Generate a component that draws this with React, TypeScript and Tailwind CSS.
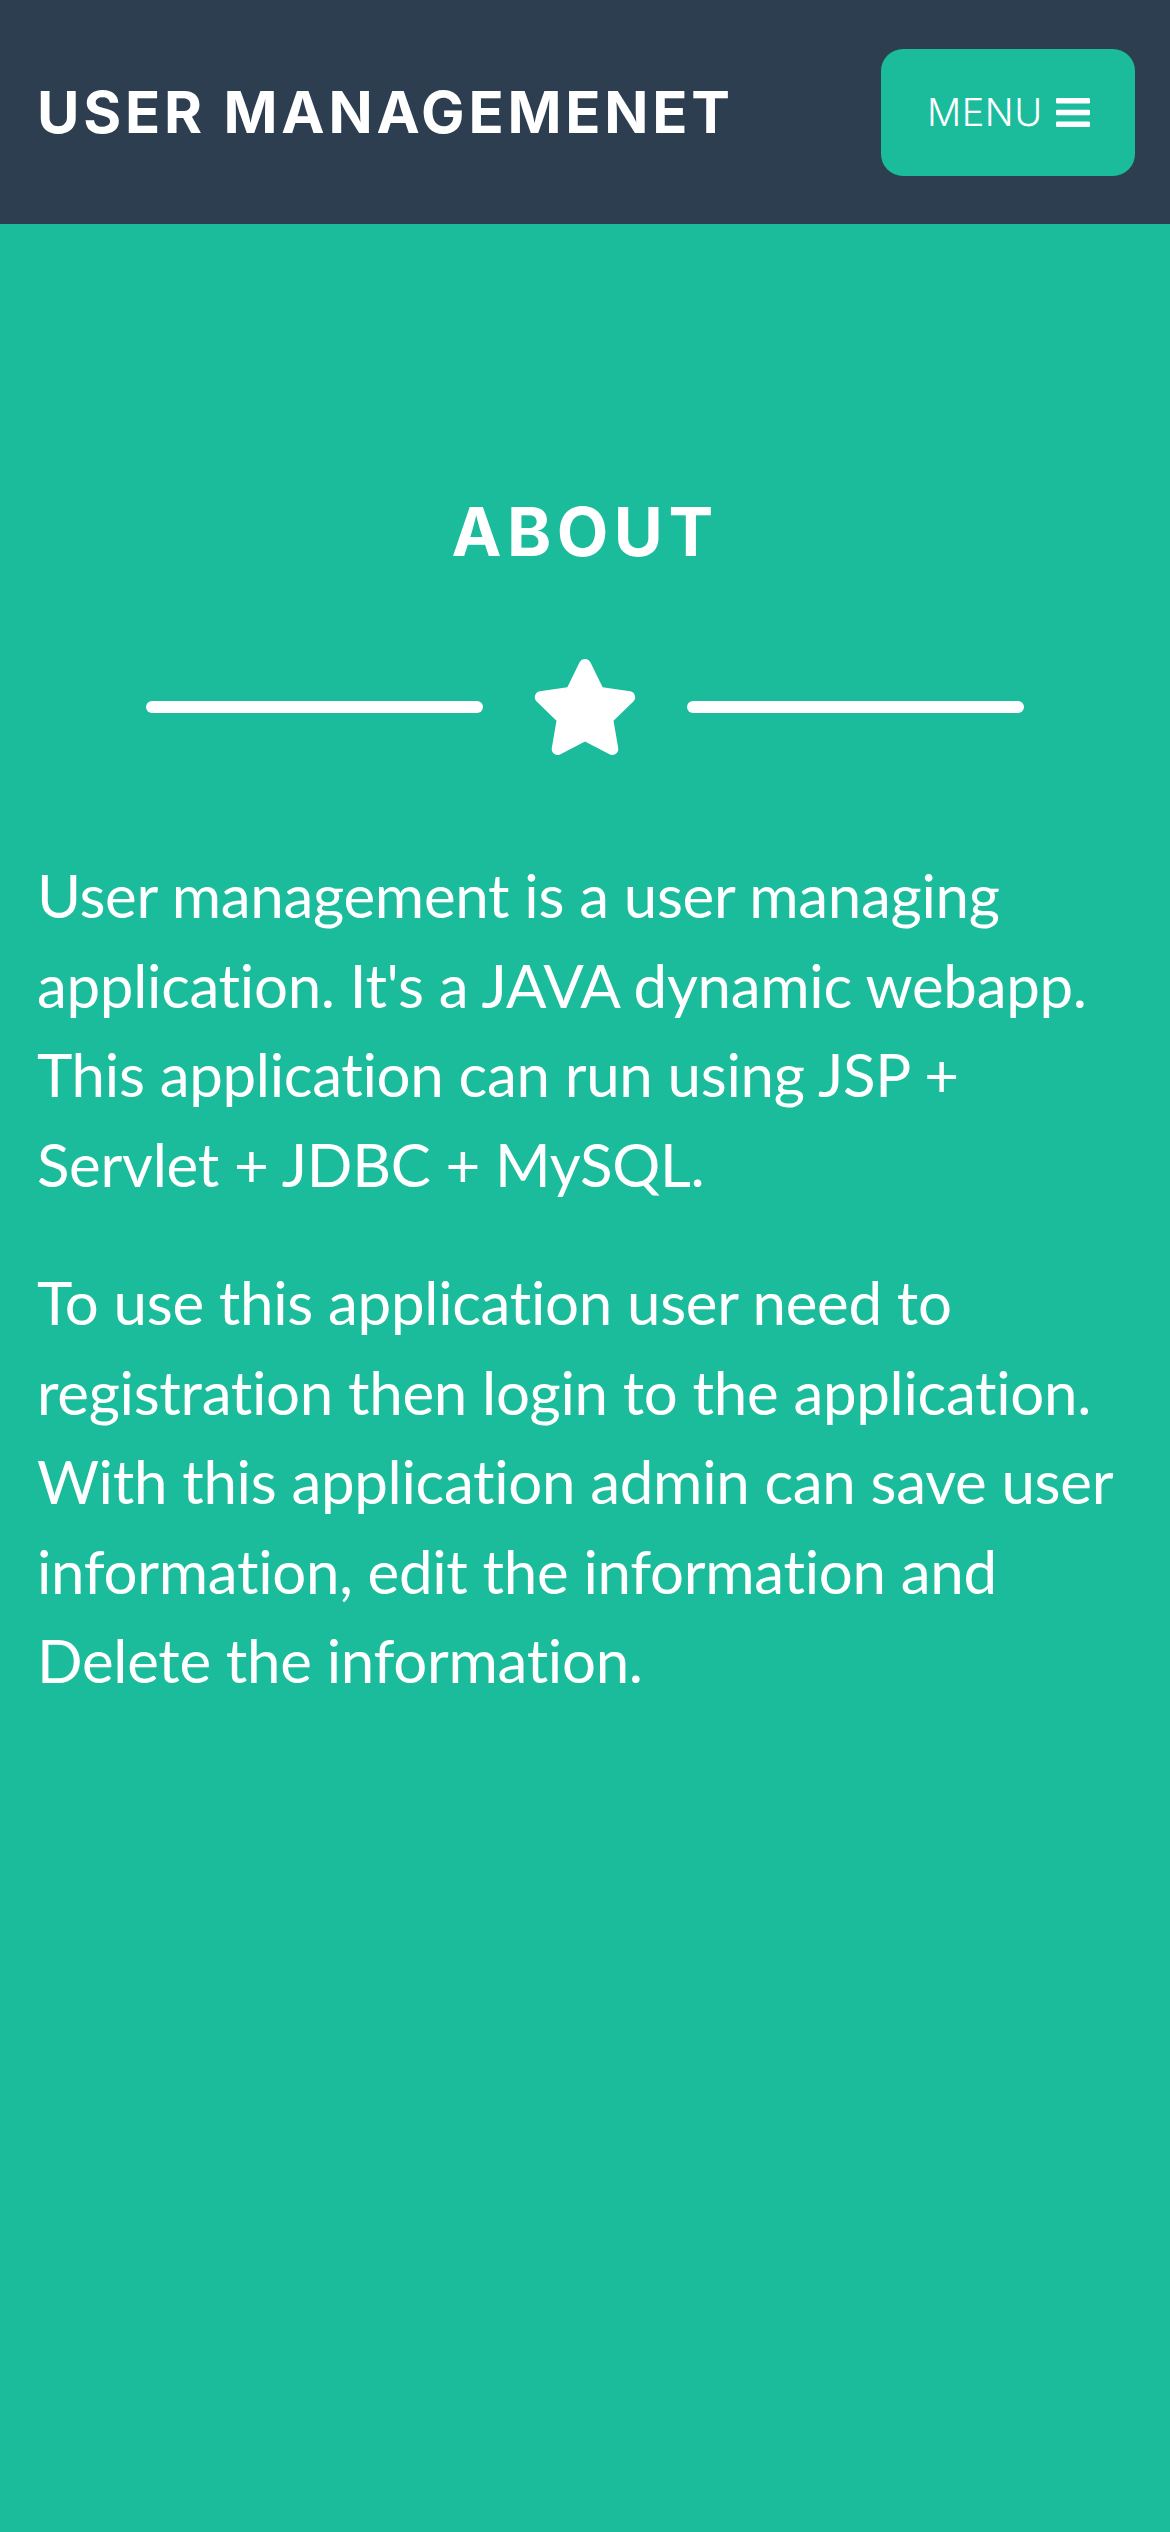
import React from "react";

function Star() {
  return (
    <svg width="108" height="96" viewBox="0 0 576 512" className="block shrink-0">
      <path
        fill="#ffffff"
        d="M259.3 17.8L194 150.2 47.9 171.5c-26.2 3.8-36.7 36.1-17.7 54.6l105.7 103-25 145.5c-4.5 26.3 23.2 46 46.4 33.7L288 439.6l130.7 68.7c23.2 12.2 50.9-7.4 46.4-33.7l-25-145.5 105.7-103c19-18.5 8.5-50.8-17.7-54.6L382 150.2 316.7 17.8c-11.7-23.6-45.6-23.9-57.4 0z"
      />
    </svg>
  );
}

function Bars() {
  return (
    <svg width="34" height="29" viewBox="0 0 34 29" className="block">
      <rect x="0" y="0" width="34" height="5.5" rx="1.2" fill="#ffffff" />
      <rect x="0" y="11.75" width="34" height="5.5" rx="1.2" fill="#ffffff" />
      <rect x="0" y="23.5" width="34" height="5.5" rx="1.2" fill="#ffffff" />
    </svg>
  );
}

export default function App() {
  return (
    <div className="min-h-screen w-full bg-[#1abc9c]">
      <header className="flex h-[224px] items-center justify-between bg-[#2c3e50] pl-[37px] pr-[35px]">
        <div
          className="text-[58px] font-bold leading-none tracking-[3.8px] text-white"
          style={{ fontFamily: "Inter, 'DejaVu Sans', sans-serif" }}
        >
          USER MANAGEMENET
        </div>
        <button className="flex h-[127px] w-[254px] items-center rounded-[22px] bg-[#1abc9c] pl-[46px] text-white">
          <span
            className="text-[38px] font-light leading-none tracking-[0.5px]"
            style={{ fontFamily: "Inter, 'DejaVu Sans', sans-serif" }}
          >
            MENU
          </span>
          <span className="ml-[13px]">
            <Bars />
          </span>
        </button>
      </header>

      <section className="px-[37px] pt-[268px]">
        <h2
          className="text-center text-[67px] font-bold leading-[80px] tracking-[5.5px] text-white"
          style={{ fontFamily: "Inter, 'DejaVu Sans', sans-serif" }}
        >
          ABOUT
        </h2>
        <div className="mt-[87px] flex items-center justify-center">
          <div className="h-[12px] w-[337px] rounded-full bg-white" />
          <div className="mx-[48px]">
            <Star />
          </div>
          <div className="h-[12px] w-[337px] rounded-full bg-white" />
        </div>
        <div
          className="mt-[96px] text-[60px] font-normal leading-[89.5px] tracking-[-0.3px] text-white [font-variant-ligatures:none]"
          style={{ fontFamily: "Lato, 'Open Sans', sans-serif" }}
        >
          <p className="mb-[49px]">
            User management is a user managing application. It's a JAVA dynamic webapp. This application can run using JSP + Servlet + JDBC + MySQL.
          </p>
          <p>
            To use this application user need to registration then login to the application. With this application admin can save user information, edit the information and Delete the information.
          </p>
        </div>
      </section>
    </div>
  );
}
